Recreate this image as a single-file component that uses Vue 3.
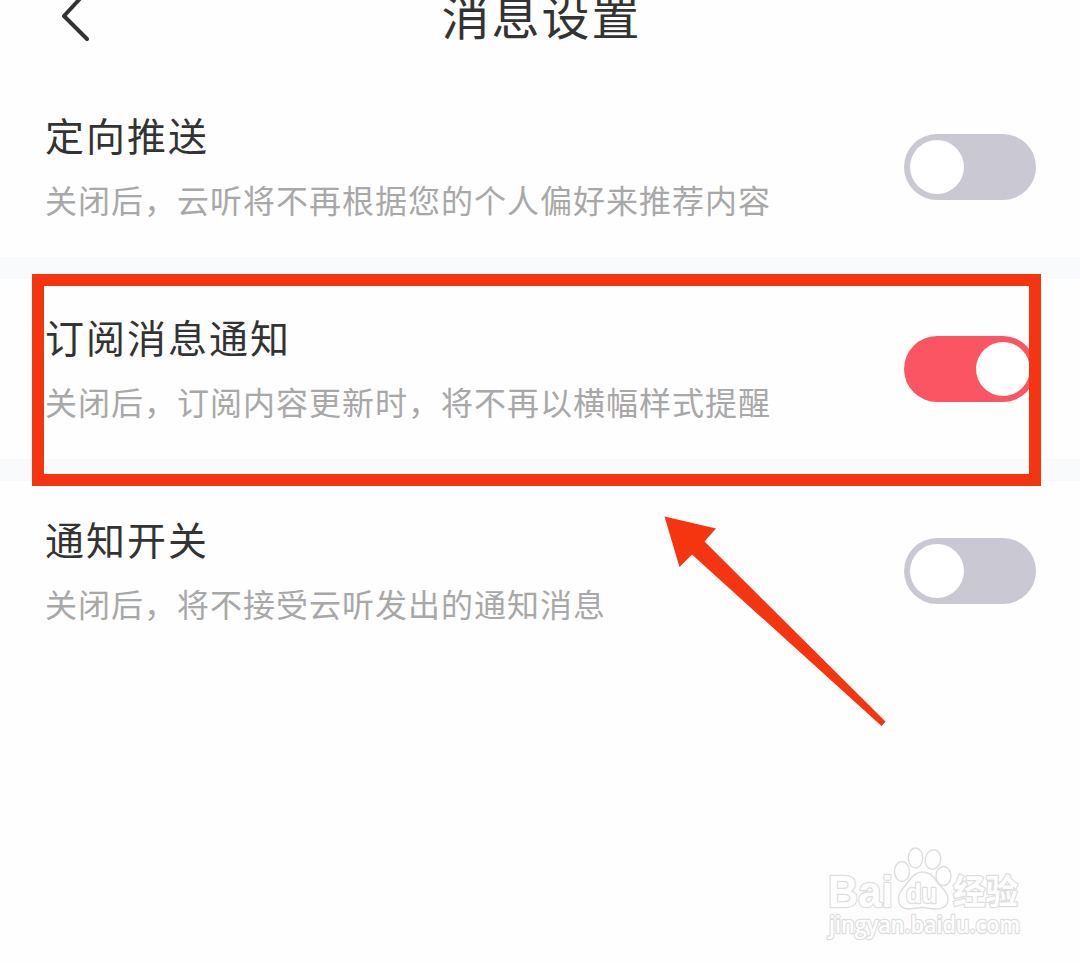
<template>
    <div class="page">
        <header class="header">
            <svg class="back" width="32" height="50" viewBox="0 0 32 50">
                <path d="M28 -10 L4 16 L27 39" />
            </svg>
            <h1>消息设置</h1>
        </header>

        <main class="settings">
            <section v-for="item in settings" :key="item.title" class="row">
                <div class="info">
                    <h2>{{ item.title }}</h2>
                    <p>{{ item.desc }}</p>
                </div>
                <button
                    type="button"
                    class="switch"
                    :class="{ on: item.enabled }"
                    @click="item.enabled = !item.enabled"
                >
                    <span class="knob"></span>
                </button>
            </section>
        </main>

        <div class="highlight"></div>

        <svg class="arrow" width="224" height="214" viewBox="0 0 224 214">
            <path
                d="M0.5 0.5 L52 12.5 L40.5 25.5 L221.500 205.500 L217.500 210 L28 38.500 L15.500 51 Z"
            />
        </svg>

        <svg class="watermark" width="210" height="105" viewBox="0 0 210 105">
            <g class="outline">
                <text x="8" y="67" class="brand" textLength="65" lengthAdjust="spacingAndGlyphs">Bai</text>
                <ellipse cx="82" cy="31.500" rx="7.500" ry="10" />
                <ellipse cx="95.500" cy="18" rx="7.200" ry="10" />
                <ellipse cx="113" cy="19.500" rx="7.700" ry="9.800" transform="rotate(10 113 19.5)" />
                <ellipse cx="123.500" cy="36" rx="7.500" ry="9.500" />
                <path
                    d="M102 32 C109 32 114 36 117 42 C121 48 128 51 128 59 C128 67 121 69 115 69 C110 69 107 67.500 102 67.500 C97 67.500 94 69 89 69 C82 69 78.500 65 78.500 58 C78.500 51 84 48 88 42 C92 36 96 32 102 32 Z"
                />
                <text x="86" y="63" class="du" textLength="31" lengthAdjust="spacingAndGlyphs">du</text>
                <text x="133" y="64" class="cn" textLength="65" lengthAdjust="spacingAndGlyphs">经验</text>
                <text x="9" y="93" class="url" textLength="191" lengthAdjust="spacingAndGlyphs">jingyan.baidu.com</text>
            </g>
        </svg>
    </div>
</template>

<script setup>
import { ref } from "vue";

const settings = ref([
    {
        title: "定向推送",
        desc: "关闭后，云听将不再根据您的个人偏好来推荐内容",
        enabled: false,
    },
    {
        title: "订阅消息通知",
        desc: "关闭后，订阅内容更新时，将不再以横幅样式提醒",
        enabled: true,
    },
    {
        title: "通知开关",
        desc: "关闭后，将不接受云听发出的通知消息",
        enabled: false,
    },
]);
</script>

<style>
body {
    margin: 0;
    background: #fefefe;
}
</style>

<style scoped>
.page {
    position: relative;
    height: 963px;
    overflow: hidden;
    background: #fefefe;
    font-family: "Noto Sans CJK SC", sans-serif;
    color: #333;
}

h1,
h2,
p {
    margin: 0;
    font-weight: 400;
    white-space: nowrap;
}

.header {
    height: 77px;
    display: grid;
    grid-template-columns: 120px 1fr 120px;
    align-items: start;
}

.back {
    margin-left: 60px;
    fill: none;
    stroke: #333;
    stroke-width: 4;
    stroke-linecap: round;
    stroke-linejoin: round;
}

h1 {
    font-size: 48px;
    line-height: 60px;
    letter-spacing: 2px;
    text-align: center;
    margin: -16px 0 0 3px;
}

.settings {
    display: flex;
    flex-direction: column;
    gap: 22px;
    background: #f9fafc;
}

.row {
    height: 180px;
    box-sizing: border-box;
    padding: 0 44px 0 45px;
    display: flex;
    align-items: center;
    justify-content: space-between;
    background: #fefefe;
}

.info {
    display: flex;
    flex-direction: column;
    gap: 21px;
    margin-bottom: 6px;
}

h2 {
    font-size: 39px;
    line-height: 48px;
    letter-spacing: 2px;
}

p {
    font-size: 32px;
    line-height: 40px;
    letter-spacing: 1px;
    color: #a8a8a8;
}

.switch {
    width: 132px;
    height: 66px;
    padding: 6px;
    border: 0;
    border-radius: 33px;
    display: flex;
    align-items: center;
    background: #cac9d3;
    cursor: pointer;
}

.switch.on {
    justify-content: flex-end;
    background: #fb5462;
}

.knob {
    width: 54px;
    height: 54px;
    border-radius: 50%;
    background: #fff;
}

.highlight {
    position: absolute;
    left: 32px;
    top: 274px;
    width: 1009px;
    height: 212px;
    box-sizing: border-box;
    border: 12px solid #f43510;
    pointer-events: none;
}

.arrow {
    position: absolute;
    left: 664px;
    top: 516px;
    fill: #f43510;
}

.watermark {
    position: absolute;
    left: 820px;
    top: 840px;
}

.outline {
    fill: #fefefe;
    stroke: #dedede;
    stroke-width: 1.4;
}

/* stroke goes under the fill so the letters stay open */
.outline text {
    stroke-width: 2.6;
    stroke-linejoin: round;
    paint-order: stroke;
}

.brand {
    font: bold 44px "Liberation Sans", sans-serif;
}

.du {
    font: bold 28px "Liberation Sans", sans-serif;
}

.cn {
    font: bold 34px "Noto Sans CJK SC", sans-serif;
}

.url {
    font: 600 23px "Open Sans", sans-serif;
}
</style>
